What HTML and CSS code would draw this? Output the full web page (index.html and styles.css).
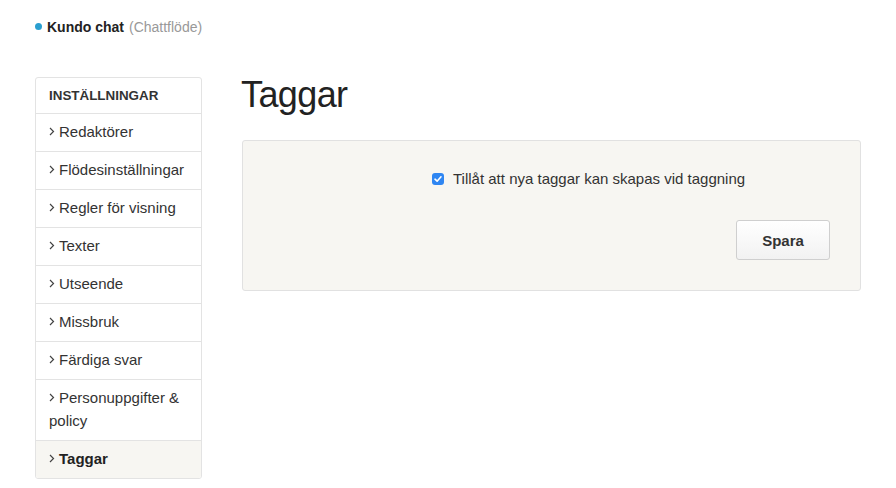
FILE: index.html
```html
<!DOCTYPE html>
<html lang="sv">
<head>
<meta charset="utf-8">
<title>Taggar</title>
<link rel="stylesheet" href="styles.css">
</head>
<body>
<header class="topbar">
  <span class="dot"></span>
  <span class="brand">Kundo chat</span>
  <span class="sub">(Chattflöde)</span>
</header>
<div class="layout">
  <nav class="sidebar">
    <div class="side-head">INSTÄLLNINGAR</div>
    <a class="side-item" href="#"><svg class="chev" viewBox="0 0 6 9" width="6" height="9"><polyline points="1,1 4.5,4.5 1,8"/></svg><span>Redaktörer</span></a>
    <a class="side-item" href="#"><svg class="chev" viewBox="0 0 6 9" width="6" height="9"><polyline points="1,1 4.5,4.5 1,8"/></svg><span>Flödesinställningar</span></a>
    <a class="side-item" href="#"><svg class="chev" viewBox="0 0 6 9" width="6" height="9"><polyline points="1,1 4.5,4.5 1,8"/></svg><span>Regler för visning</span></a>
    <a class="side-item" href="#"><svg class="chev" viewBox="0 0 6 9" width="6" height="9"><polyline points="1,1 4.5,4.5 1,8"/></svg><span>Texter</span></a>
    <a class="side-item" href="#"><svg class="chev" viewBox="0 0 6 9" width="6" height="9"><polyline points="1,1 4.5,4.5 1,8"/></svg><span>Utseende</span></a>
    <a class="side-item" href="#"><svg class="chev" viewBox="0 0 6 9" width="6" height="9"><polyline points="1,1 4.5,4.5 1,8"/></svg><span>Missbruk</span></a>
    <a class="side-item" href="#"><svg class="chev" viewBox="0 0 6 9" width="6" height="9"><polyline points="1,1 4.5,4.5 1,8"/></svg><span>Färdiga svar</span></a>
    <a class="side-item" href="#"><svg class="chev" viewBox="0 0 6 9" width="6" height="9"><polyline points="1,1 4.5,4.5 1,8"/></svg>Personuppgifter &amp; policy</a>
    <a class="side-item active" href="#"><svg class="chev" viewBox="0 0 6 9" width="6" height="9"><polyline points="1,1 4.5,4.5 1,8"/></svg><span>Taggar</span></a>
  </nav>
  <main class="content">
    <h1 class="title">Taggar</h1>
    <form class="panel">
      <label class="check-row">
        <span class="checkbox"><svg viewBox="0 0 12 12" width="12" height="12"><polyline points="3,6.2 5.1,8.2 9,3.8"/></svg></span>
        <span>Tillåt att nya taggar kan skapas vid taggning</span>
      </label>
      <div class="actions">
        <button type="button" class="btn">Spara</button>
      </div>
    </form>
  </main>
</div>
</body>
</html>
```
FILE: styles.css
```css
* { box-sizing: border-box; }
html, body { margin: 0; padding: 0; background: #fff; }
body {
  font-family: "Liberation Sans", Arial, sans-serif;
  color: #333;
  font-size: 15px;
}
.topbar {
  display: flex;
  align-items: center;
  padding: 17px 0 0 35px;
  height: 36px;
  font-size: 14px;
  line-height: 20px;
}
.dot {
  width: 7px;
  height: 7px;
  border-radius: 50%;
  background: #2a9fd0;
  margin-right: 5px;
}
.brand { font-weight: bold; color: #222; margin-right: 5px; }
.sub { color: #999; }

.layout {
  display: flex;
  align-items: flex-start;
  gap: 40px;
  padding: 0 0 0 35px;
  margin-top: 41px;
}
.sidebar {
  width: 167px;
  flex: none;
  border: 1px solid #e3e3e3;
  border-radius: 3px;
  display: flex;
  flex-direction: column;
  overflow: hidden;
}
.side-head {
  padding: 6px 13px;
  line-height: 23px;
  font-size: 13.4px;
  font-weight: bold;
  color: #333;
}
.side-item {
  display: block;
  border-top: 1px solid #e3e3e3;
  padding: 6px 13px 8px;
  line-height: 23px;
  color: #333;
  text-decoration: none;
}
.side-item.active {
  background: #f7f6f2;
  font-weight: bold;
  color: #222;
}
.chev {
  display: inline-block;
  vertical-align: 1px;
  margin-right: 4px;
  fill: none;
  stroke: #444;
  stroke-width: 1.2;
}
.content {
  width: 619px;
  flex: none;
}
.title {
  margin: -2px 0 0 -1px;
  font-size: 36px;
  line-height: 40px;
  font-weight: normal;
  letter-spacing: -0.6px;
  color: #222;
}
.panel {
  margin-top: 25px;
  background: #f7f6f2;
  border: 1px solid #e1e1e1;
  border-radius: 3px;
  padding: 28px 30px 30px 189px;
  display: flex;
  flex-direction: column;
}
.check-row {
  display: flex;
  align-items: center;
  gap: 9px;
  line-height: 20px;
  color: #333;
}
.checkbox {
  width: 12px;
  height: 12px;
  border-radius: 3px;
  background: #2f86f2;
  display: flex;
}
.checkbox svg {
  fill: none;
  stroke: #fff;
  stroke-width: 1.6;
  stroke-linecap: round;
  stroke-linejoin: round;
}
.actions {
  margin-top: 31px;
  display: flex;
  justify-content: flex-end;
}
.btn {
  width: 94px;
  height: 40px;
  font-family: "Liberation Sans", Arial, sans-serif;
  font-size: 15px;
  font-weight: bold;
  color: #333;
  background: linear-gradient(#ffffff, #f2f2f2);
  border: 1px solid #cfcfcf;
  border-radius: 3px;
}
```
